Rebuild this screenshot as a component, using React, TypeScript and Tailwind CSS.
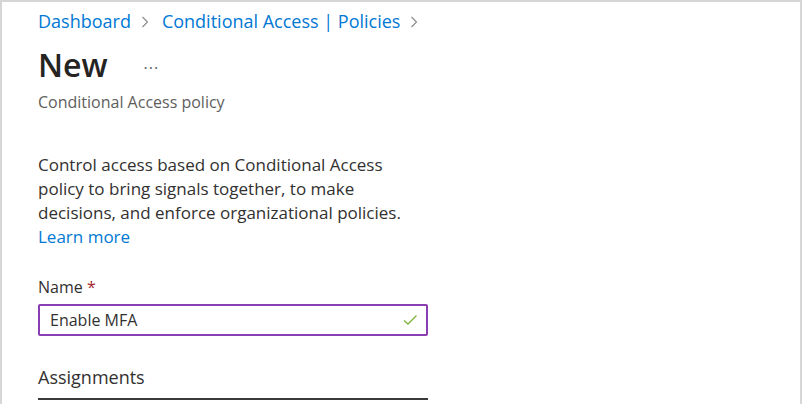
import React from "react";

function Chevron() {
  return (
    <svg width="8" height="12" viewBox="0 0 8 12" fill="none" className="mt-[2px]">
      <path d="M1.5 1 L6.5 6 L1.5 11" stroke="#8a8886" strokeWidth="1.1" />
    </svg>
  );
}

export default function App() {
  return (
    <div className="w-[804px] h-[404px] overflow-hidden bg-white">
      <div
        className="w-[802px] h-[404px] border-2 border-b-0 border-[#d6d6d6] bg-white pl-[36px] text-[#323130]"
        style={{ fontFamily: '"Open Sans", "Noto Sans", sans-serif' }}
      >
        <div className="flex items-center h-[36px] pt-[2px] text-[18px] text-[#0078d4] leading-none">
          <span>Dashboard</span>
          <span className="ml-[10px] mr-[13px] flex items-center"><Chevron /></span>
          <span>Conditional Access | Policies</span>
          <span className="ml-[10px] flex items-center"><Chevron /></span>
        </div>
        <div className="flex items-center h-[50px] mt-[2px]">
          <span className="text-[32px] font-semibold leading-none text-[#252423]">New</span>
          <span className="ml-[36px] mt-[5px] text-[16px] text-[#605e5c] leading-none tracking-[1px]">···</span>
        </div>
        <div className="text-[16px] text-[#605e5c] leading-[20px] mt-[2px]">Conditional Access policy</div>
        <div className="mt-[41px] w-[385px] text-[17px] leading-[24px] text-[#323130]">
          Control access based on Conditional Access policy to bring signals together, to make decisions, and enforce organizational policies.
          <br />
          <span className="text-[#0078d4]">Learn more</span>
        </div>
        <div className="mt-[26px] text-[16px] leading-[24px]">
          Name <span className="text-[#a4262c]">*</span>
        </div>
        <div className="mt-[5px] w-[390px] h-[32px] border-2 border-[#8a3eb3] rounded-[2px] flex items-center justify-between pl-[10px] pr-[8px]">
          <span className="text-[16px] text-[#323130]">Enable MFA</span>
          <svg width="16" height="16" viewBox="0 0 16 16" fill="none">
            <path d="M2 8.5 L6 12 L14.5 3.5" stroke="#7fb23f" strokeWidth="1.3" />
          </svg>
        </div>
        <div className="mt-[29px] text-[18px] leading-[24px] text-[#323130]">Assignments</div>
        <div className="mt-[9px] w-[390px] h-[2px] bg-[#3b3a39]" />
      </div>
    </div>
  );
}
